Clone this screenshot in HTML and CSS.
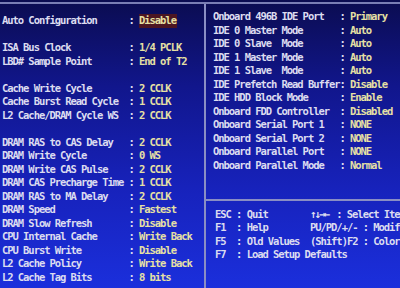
FILE: index.html
```html
<!DOCTYPE html>
<html>
<head>
    <meta charset="utf-8"/>
    <title>Chipset Features Setup</title>
    <link rel="stylesheet" href="styles.css">
</head>
<body>
    <div class="screen">
        <div class="frame">
            <div class="panel left">
                <div class="row"><span class="label">Auto Configuration</span><span class="sep">:</span><span class="val hl">Disable</span></div>
                <div class="row blank"></div>
                <div class="row"><span class="label">ISA Bus Clock</span><span class="sep">:</span><span class="val">1/4 PCLK</span></div>
                <div class="row"><span class="label">LBD# Sample Point</span><span class="sep">:</span><span class="val">End of T2</span></div>
                <div class="row blank"></div>
                <div class="row"><span class="label">Cache Write Cycle</span><span class="sep">:</span><span class="val">2 CCLK</span></div>
                <div class="row"><span class="label">Cache Burst Read Cycle</span><span class="sep">:</span><span class="val">1 CCLK</span></div>
                <div class="row"><span class="label">L2 Cache/DRAM Cycle WS</span><span class="sep">:</span><span class="val">2 CCLK</span></div>
                <div class="row blank"></div>
                <div class="row"><span class="label">DRAM RAS to CAS Delay</span><span class="sep">:</span><span class="val">2 CCLK</span></div>
                <div class="row"><span class="label">DRAM Write Cycle</span><span class="sep">:</span><span class="val">0 WS</span></div>
                <div class="row"><span class="label">DRAM Write CAS Pulse</span><span class="sep">:</span><span class="val">2 CCLK</span></div>
                <div class="row"><span class="label">DRAM CAS Precharge Time</span><span class="sep">:</span><span class="val">1 CCLK</span></div>
                <div class="row"><span class="label">DRAM RAS to MA Delay</span><span class="sep">:</span><span class="val">2 CCLK</span></div>
                <div class="row"><span class="label">DRAM Speed</span><span class="sep">:</span><span class="val">Fastest</span></div>
                <div class="row"><span class="label">DRAM Slow Refresh</span><span class="sep">:</span><span class="val">Disable</span></div>
                <div class="row"><span class="label">CPU Internal Cache</span><span class="sep">:</span><span class="val">Write Back</span></div>
                <div class="row"><span class="label">CPU Burst Write</span><span class="sep">:</span><span class="val">Disable</span></div>
                <div class="row"><span class="label">L2 Cache Policy</span><span class="sep">:</span><span class="val">Write Back</span></div>
                <div class="row"><span class="label">L2 Cache Tag Bits</span><span class="sep">:</span><span class="val">8 bits</span></div>
            </div>
            <div class="panel right">
                <div class="settings">
                    <div class="row"><span class="label">Onboard 496B IDE Port</span><span class="sep">:</span><span class="val">Primary</span></div>
                    <div class="row"><span class="label">IDE 0 Master Mode</span><span class="sep">:</span><span class="val">Auto</span></div>
                    <div class="row"><span class="label">IDE 0 Slave  Mode</span><span class="sep">:</span><span class="val">Auto</span></div>
                    <div class="row"><span class="label">IDE 1 Master Mode</span><span class="sep">:</span><span class="val">Auto</span></div>
                    <div class="row"><span class="label">IDE 1 Slave  Mode</span><span class="sep">:</span><span class="val">Auto</span></div>
                    <div class="row"><span class="label">IDE Prefetch Read Buffer</span><span class="sep">:</span><span class="val">Disable</span></div>
                    <div class="row"><span class="label">IDE HDD Block Mode</span><span class="sep">:</span><span class="val">Enable</span></div>
                    <div class="row"><span class="label">Onboard FDD Controller</span><span class="sep">:</span><span class="val">Disabled</span></div>
                    <div class="row"><span class="label">Onboard Serial Port 1</span><span class="sep">:</span><span class="val">NONE</span></div>
                    <div class="row"><span class="label">Onboard Serial Port 2</span><span class="sep">:</span><span class="val">NONE</span></div>
                    <div class="row"><span class="label">Onboard Parallel Port</span><span class="sep">:</span><span class="val">NONE</span></div>
                    <div class="row"><span class="label">Onboard Parallel Mode</span><span class="sep">:</span><span class="val">Normal</span></div>
                </div>
                <div class="help">
                    <span>ESC : Quit</span><span><span class="arrows">↑↓→←</span> : Select Item</span>
                    <span>F1  : Help</span><span>PU/PD/+/- : Modify</span>
                    <span>F5  : Old Values</span><span>(Shift)F2 : Color</span>
                    <span class="wide">F7  : Load Setup Defaults</span>
                </div>
            </div>
        </div>
    </div>
</body>
</html>
```

FILE: styles.css
```css
body {
    margin: 0;
    background: #0a0a30;
}
.screen {
    width: 400px;
    height: 288px;
    overflow: hidden;
    background: linear-gradient(180deg, #0b0c50 0%, #11168c 30%, #1722bb 65%, #1b2fdc 100%);
    font-family: "DejaVu Sans Mono", "Liberation Mono", monospace;
    font-weight: bold;
    font-size: 10.5px;
    letter-spacing: -1.05px;
    color: #dcdcf0;
}
.frame {
    margin-top: 2px;
    border-top: 2px solid #7a7eb4;
    height: 284px;
    display: grid;
    grid-template-columns: 204px 1fr;
}
.row {
    display: flex;
    height: 13.5px;
    line-height: 13.5px;
    white-space: pre;
}
.label {
    width: 126.5px;
    flex: none;
}
.sep {
    width: 10.5px;
    flex: none;
}
.val {
    color: #e6e0a4;
}
.val.hl {
    background: #4c1622;
    padding-right: 1px;
}
.left {
    padding: 10px 0 0 2px;
}
.right {
    border-left: 2px solid #8a8ec4;
    display: flex;
    flex-direction: column;
    overflow: hidden;
}
.settings {
    height: 197px;
    padding: 6px 0 0 7px;
    box-sizing: border-box;
    border-bottom: 2px solid #8a8ec4;
}
.help {
    padding: 6.5px 0 0 9px;
    display: grid;
    grid-template-columns: 95px auto;
    grid-auto-rows: 13.5px;
    line-height: 13.5px;
    white-space: pre;
}
.help .wide {
    grid-column: 1 / 3;
}
.arrows {
    display: inline-block;
    width: 21px;
    font-size: 11px;
    letter-spacing: -2px;
}
```
